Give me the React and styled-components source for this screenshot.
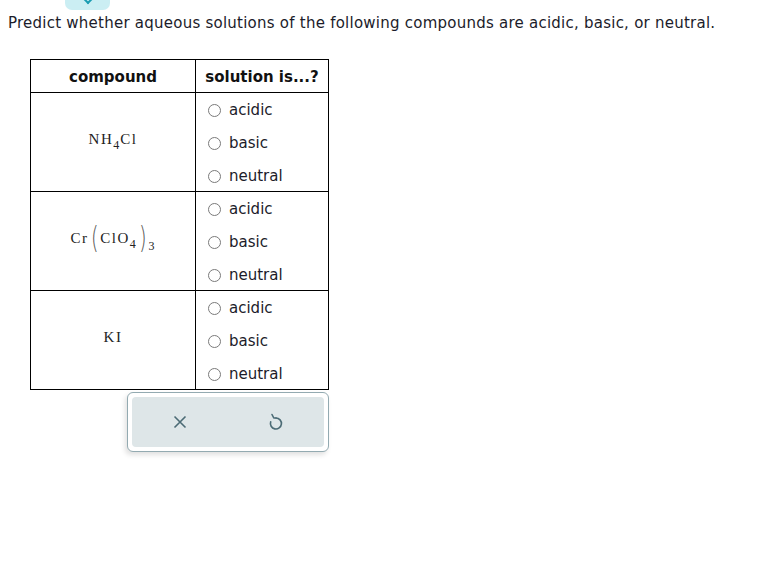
import React from 'react';
import styled, { createGlobalStyle } from 'styled-components';

const Global = createGlobalStyle`
    html, body {
        margin: 0;
        padding: 0;
        background: #fff;
    }
    body {
        font-family: 'DejaVu Sans', Verdana, sans-serif;
        color: #222;
    }
`;

const Page = styled.div`
    position: relative;
    width: 760px;
    height: 577px;
    padding: 13px 8px 0 8px;
    box-sizing: border-box;
`;

const TopTab = styled.div`
    position: absolute;
    top: 0;
    left: 65px;
    width: 45px;
    height: 10px;
    background: #cbeef3;
    border-radius: 0 0 7px 7px;
    display: flex;
    justify-content: center;

    &::after {
        content: '';
        width: 4px;
        height: 4px;
        margin-top: -3px;
        border-right: 2px solid #1b9db2;
        border-bottom: 2px solid #1b9db2;
        transform: rotate(45deg);
    }
`;

const Prompt = styled.p`
    margin: 0;
    font-size: 15px;
    line-height: 20px;
    letter-spacing: 0.24px;
    color: #1c1c2a;
`;

const Grid = styled.table`
    margin: 26px 0 0 22px;
    border-collapse: collapse;
    width: 299px;
`;

const HeadCell = styled.th`
    border: 1px solid #000;
    height: 33px;
    padding: 2px 0 0;
    box-sizing: border-box;
    font-size: 15px;
    font-weight: bold;
    color: #111;
    text-align: center;
    width: ${p => p.$w}px;
`;

const Cell = styled.td`
    border: 1px solid #000;
    padding: 0;
    height: 98px;
    vertical-align: middle;
`;

const Formula = styled.div`
    font-family: 'Liberation Serif', 'Times New Roman', serif;
    font-size: 15px;
    letter-spacing: 1.5px;
    color: #222;
    text-align: center;
    margin-top: -6px;
    white-space: nowrap;
`;

const Sub = styled.span`
    font-size: 12px;
    position: relative;
    top: ${p => (p.$low ? 7 : 5)}px;
    letter-spacing: 0;
    margin-right: 1px;
`;

const Paren = styled.span`
    display: inline-block;
    font-family: 'DejaVu Sans', sans-serif;
    font-size: 30px;
    font-weight: 200;
    line-height: 1;
    color: #555;
    transform: scaleX(0.65);
    vertical-align: -5px;
    letter-spacing: 0;
`;

const Options = styled.div`
    display: flex;
    flex-direction: column;
    gap: 13px;
    padding: 2px 0 0 12px;
`;

const Option = styled.label`
    display: flex;
    align-items: center;
    gap: 8px;
    font-size: 15px;
    height: 20px;
    color: #1c1c2a;
`;

const Radio = styled.span`
    width: 13px;
    height: 13px;
    border: 1px solid #7a7a7a;
    border-radius: 50%;
    box-sizing: border-box;
    flex: none;
`;

const Actions = styled.div`
    margin: 2px 0 0 119px;
    width: 202px;
    height: 60px;
    box-sizing: border-box;
    border: 1px solid #93aab1;
    border-radius: 6px;
    background: #fff;
    padding: 4px;
    box-shadow: -2px 3px 5px rgba(0, 0, 0, 0.12);
`;

const ActionInner = styled.div`
    height: 100%;
    background: #dee6e8;
    border-radius: 4px;
    display: grid;
    grid-template-columns: 1fr 1fr;
    align-items: center;
    justify-items: center;
`;

const IconButton = styled.button`
    border: 0;
    background: none;
    padding: 0;
    display: flex;
    color: #4b6b75;
`;

const CompoundCell = ({ children }) => (
    <Cell>
        <Formula>{children}</Formula>
    </Cell>
);

const Choices = () => (
    <Cell>
        <Options>
            {['acidic', 'basic', 'neutral'].map(t => (
                <Option key={t}>
                    <Radio />
                    {t}
                </Option>
            ))}
        </Options>
    </Cell>
);

export default function App() {
    return (
        <Page>
            <Global />
            <TopTab />
            <Prompt>Predict whether aqueous solutions of the following compounds are acidic, basic, or neutral.</Prompt>
            <Grid>
                <thead>
                    <tr>
                        <HeadCell $w={165}>compound</HeadCell>
                        <HeadCell $w={133}>solution is...?</HeadCell>
                    </tr>
                </thead>
                <tbody>
                    <tr>
                        <CompoundCell>
                            NH<Sub>4</Sub>Cl
                        </CompoundCell>
                        <Choices />
                    </tr>
                    <tr>
                        <CompoundCell>
                            Cr<Paren>(</Paren>ClO<Sub>4</Sub><Paren>)</Paren><Sub $low>3</Sub>
                        </CompoundCell>
                        <Choices />
                    </tr>
                    <tr>
                        <CompoundCell>KI</CompoundCell>
                        <Choices />
                    </tr>
                </tbody>
            </Grid>
            <Actions>
                <ActionInner>
                    <IconButton aria-label="clear">
                        <svg width="14" height="14" viewBox="0 0 14 14" fill="none" stroke="currentColor" strokeWidth="1.6">
                            <path d="M1.5 1.5 L12.5 12.5 M12.5 1.5 L1.5 12.5" />
                        </svg>
                    </IconButton>
                    <IconButton aria-label="reset">
                        <svg width="16" height="18" viewBox="0 0 16 18" fill="none" stroke="currentColor" strokeWidth="1.6" strokeLinecap="round" strokeLinejoin="round">
                            <path d="M4 1.5 L5.8 5 L8 5" />
                            <path d="M8 5 A5.5 5.5 0 1 1 2.7 8.8" />
                        </svg>
                    </IconButton>
                </ActionInner>
            </Actions>
        </Page>
    );
}
